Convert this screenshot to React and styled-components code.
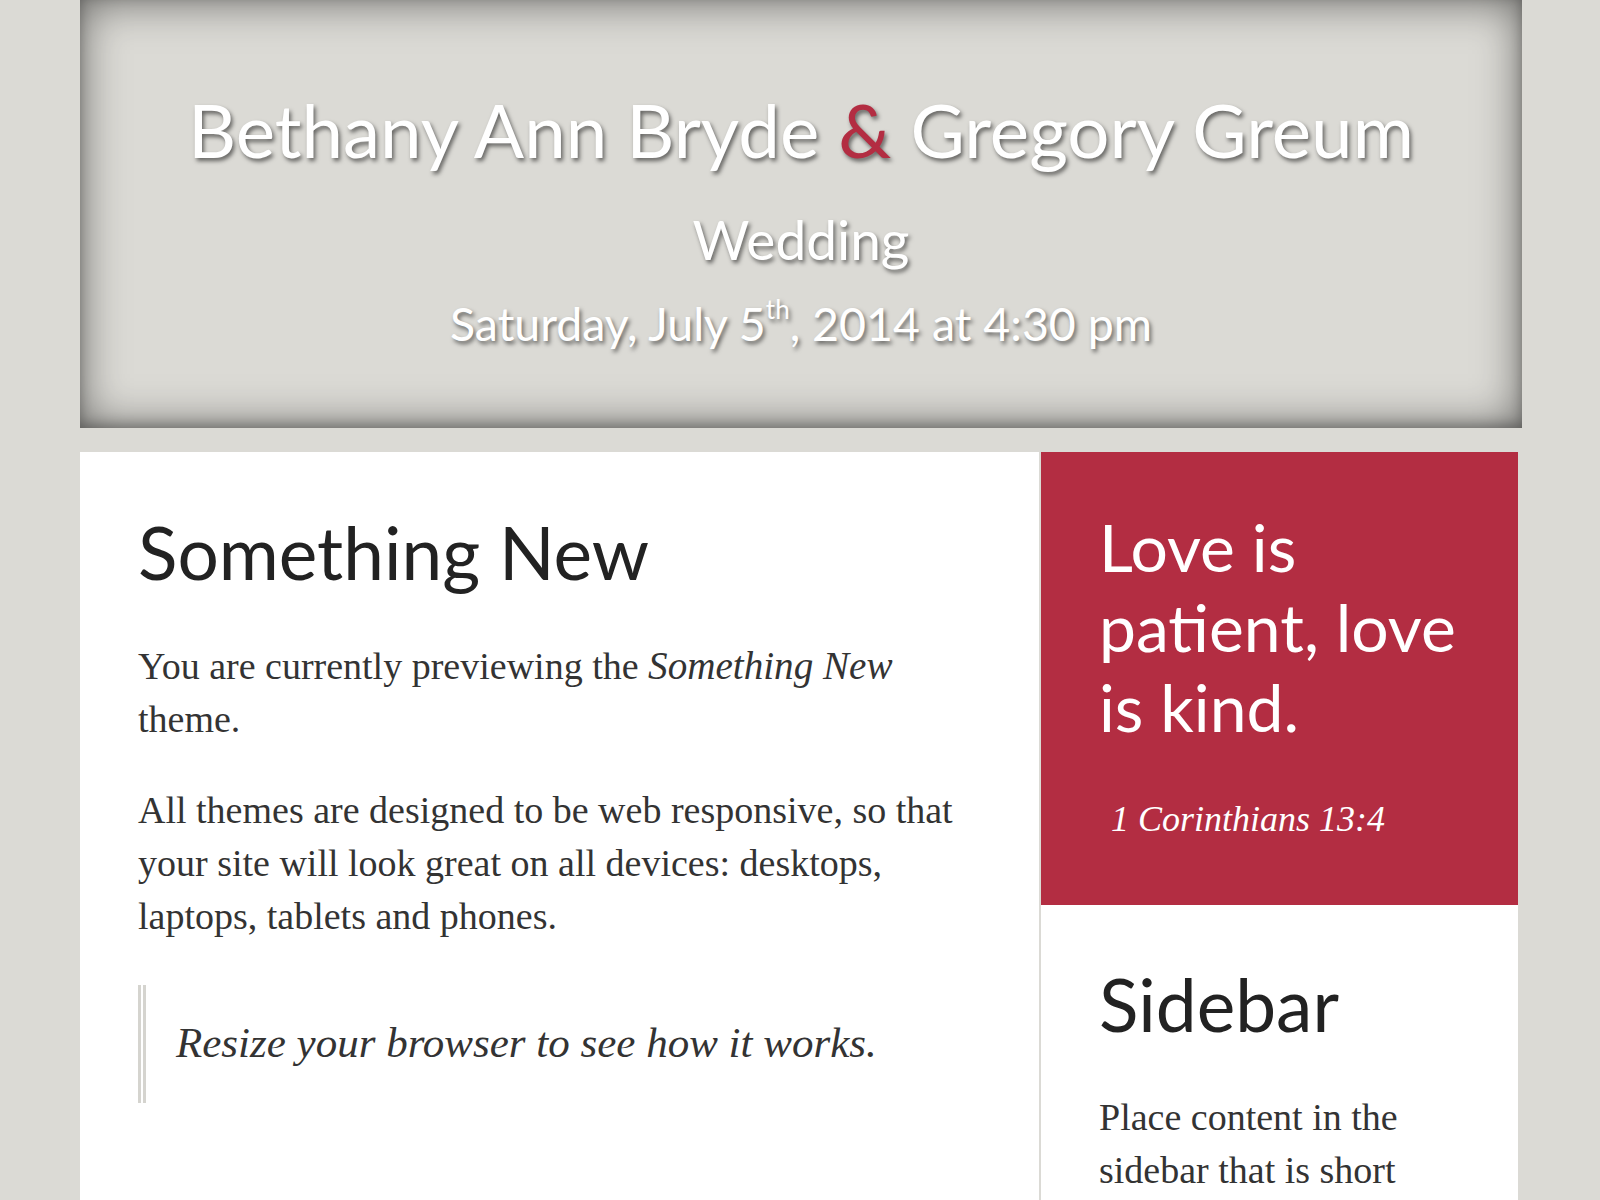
import React from "react";
import styled, { createGlobalStyle } from "styled-components";

const Global = createGlobalStyle`
  body {
    margin: 0;
    background: #dbdad5;
    font-family: "Liberation Serif", serif;
  }
`;

function App() {
  return (
    <>
      <Global />
      <Page>
        <Header>
          <Title>
            Bethany Ann Bryde <Amp>&amp;</Amp> Gregory Greum
          </Title>
          <Subtitle>Wedding</Subtitle>
          <DateLine>
            Saturday, July 5<Sup>th</Sup>, 2014 at 4:30 pm
          </DateLine>
        </Header>
        <Columns>
          <Main>
            <Heading>Something New</Heading>
            <Para>
              You are currently previewing the <em>Something New</em> theme.
            </Para>
            <Para>
              All themes are designed to be web responsive, so that your site
              will look great on all devices: desktops, laptops, tablets and
              phones.
            </Para>
            <Quote>Resize your browser to see how it works.</Quote>
          </Main>
          <Sidebar>
            <Callout>
              <CalloutText>Love is patient, love is kind.</CalloutText>
              <Cite>1 Corinthians 13:4</Cite>
            </Callout>
            <Widget>
              <Heading>Sidebar</Heading>
              <Para>Place content in the sidebar that is short</Para>
            </Widget>
          </Sidebar>
        </Columns>
      </Page>
    </>
  );
}

export default App;

const Page = styled.div`
  width: 1442px;
  margin-left: 80px;
`;

const Header = styled.header`
  height: 428px;
  box-sizing: border-box;
  padding-top: 84px;
  display: flex;
  flex-direction: column;
  align-items: center;
  background: #dbdad5;
  box-shadow: inset 0 0 45px rgba(0, 0, 0, 0.55),
    inset 0 -4px 12px rgba(0, 0, 0, 0.25);
  font-family: Lato, sans-serif;
  color: #fff;
  text-shadow: 2px 3px 4px rgba(0, 0, 0, 0.55);
`;

const Title = styled.h1`
  margin: 0;
  font-size: 74.5px;
  line-height: 90px;
  font-weight: 400;
`;

const Amp = styled.span`
  color: #b32d42;
`;

const Subtitle = styled.div`
  margin-top: 32px;
  font-size: 55px;
  line-height: 66px;
`;

const DateLine = styled.div`
  margin-top: 23px;
  font-size: 46.5px;
  line-height: 56px;
`;

const Sup = styled.sup`
  font-size: 26px;
  line-height: 0;
  vertical-align: 22px;
`;

const Columns = styled.div`
  display: flex;
  width: 1438px;
  margin-top: 24px;
  min-height: 800px;
`;

const Main = styled.main`
  width: 959px;
  box-sizing: border-box;
  padding: 56px 58px 0;
  background: #fff;
`;

const Heading = styled.h2`
  margin: 0 0 43px;
  font-family: Lato, sans-serif;
  font-size: 73px;
  line-height: 88px;
  font-weight: 400;
  color: #222;
`;

const Para = styled.p`
  margin: 0 0 38px;
  font-size: 38px;
  line-height: 53px;
  color: #333;
  em {
    font-style: italic;
    font-size: 1.03em;
  }
`;

const Quote = styled.blockquote`
  margin: 42px 0 0;
  padding: 26px 0 28px 30px;
  border-left: 8px double #d5d4cf;
  font-size: 43px;
  line-height: 64px;
  font-style: italic;
  color: #333;
`;

const Sidebar = styled.aside`
  width: 479px;
  box-sizing: border-box;
  border-left: 2px solid #dbdad5;
  background: #fff;
  display: flex;
  flex-direction: column;
`;

const Callout = styled.div`
  padding: 55px 40px 59px 58px;
  background: #b32d42;
  color: #fff;
`;

const CalloutText = styled.p`
  margin: 0;
  font-family: Lato, sans-serif;
  font-size: 66px;
  line-height: 80px;
`;

const Cite = styled.div`
  margin-top: 46px;
  padding-left: 12px;
  font-size: 36px;
  line-height: 53px;
  font-style: italic;
`;

const Widget = styled.div`
  padding: 55px 70px 0 58px;
`;
